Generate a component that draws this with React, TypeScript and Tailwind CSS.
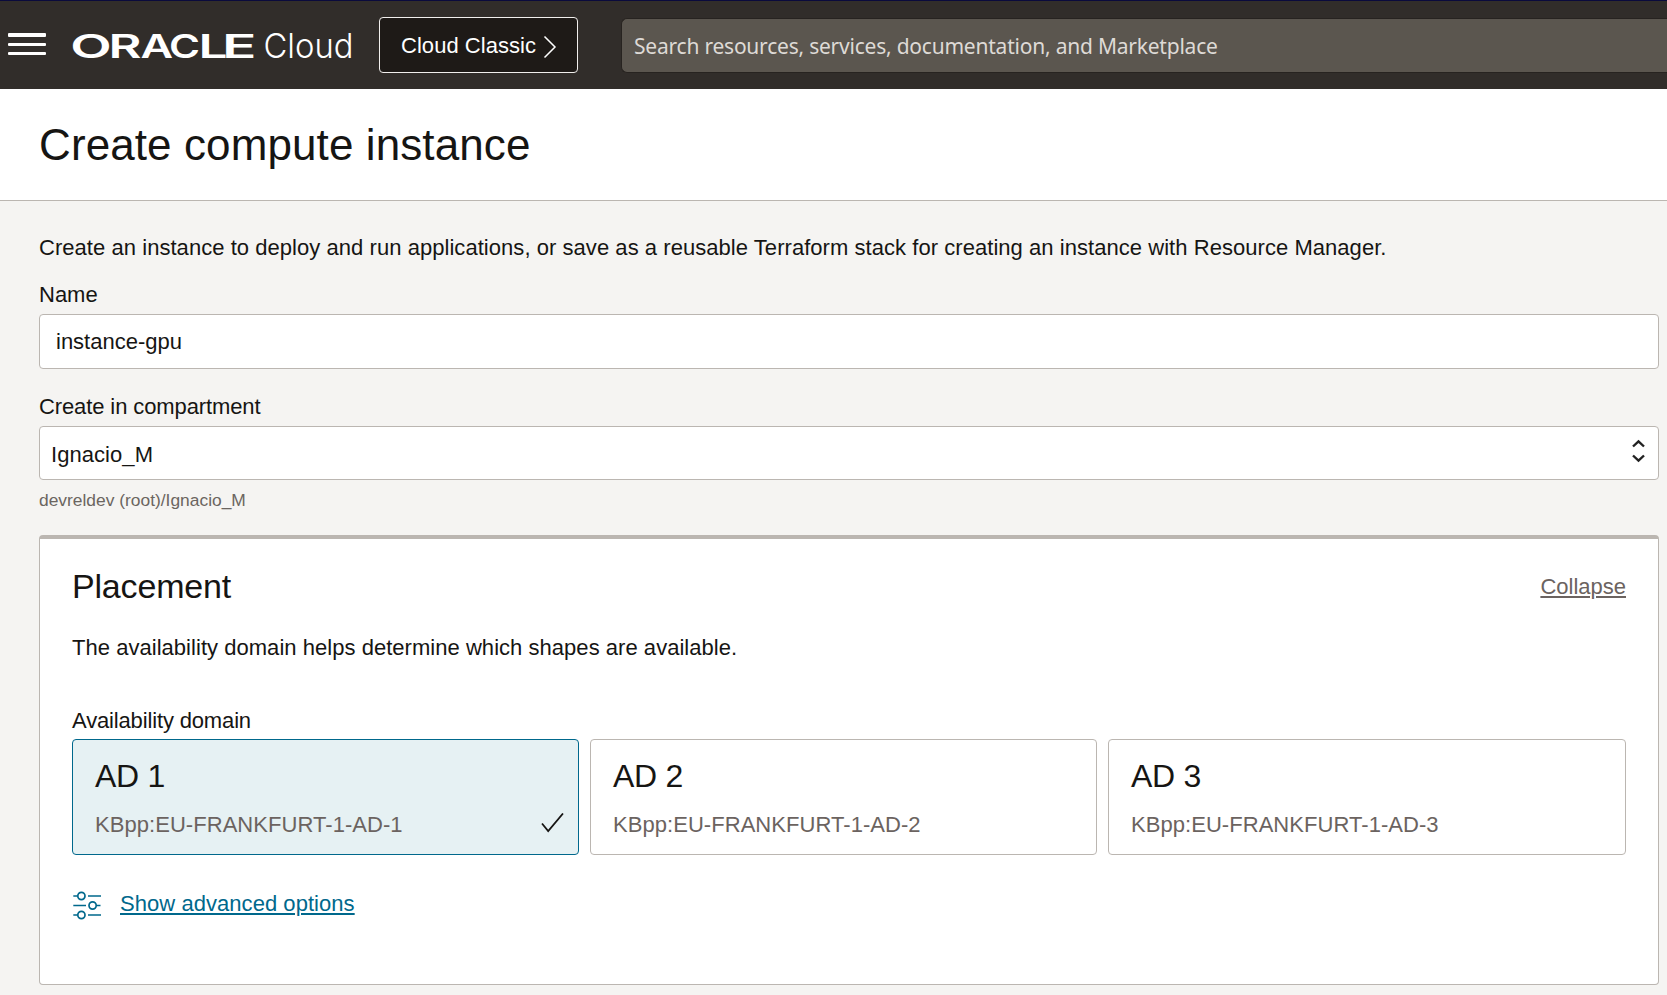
import React from "react";

const domains = [
  { title: "AD 1", id: "KBpp:EU-FRANKFURT-1-AD-1", selected: true },
  { title: "AD 2", id: "KBpp:EU-FRANKFURT-1-AD-2", selected: false },
  { title: "AD 3", id: "KBpp:EU-FRANKFURT-1-AD-3", selected: false },
];

// Each wordmark letter is widened separately: [letter, x, advance].
const wordmark: [string, number, number][] = [
  ["O", -1.7, 41.4],
  ["R", 36.4, 33],
  ["A", 68.4, 32.6],
  ["C", 97, 31],
  ["L", 126.4, 29],
  ["E", 150, 34.5],
];

function Logo() {
  return (
    <svg className="ml-[25px] block h-[50px] w-[284px] shrink-0 overflow-visible" viewBox="0 0 284 50" fill="#fff" aria-label="ORACLE Cloud">
      <text y="38" fontFamily="Inter, sans-serif" fontWeight="600" fontSize="32">
        {wordmark.map(([ch, x, len]) => (
          <tspan key={ch} x={x} textLength={len} lengthAdjust="spacingAndGlyphs">
            {ch}
          </tspan>
        ))}
      </text>
      <text x="191.500" y="38" fontFamily="Inter, sans-serif" fontWeight="300" fontSize="34.500" textLength="90" lengthAdjust="spacingAndGlyphs">
        Cloud
      </text>
    </svg>
  );
}

function Header() {
  return (
    <header className="flex h-[89px] items-center border-t border-[#0a0a3c] bg-[#312d2a]">
      <svg className="ml-2 block h-[24px] w-[39px] shrink-0" viewBox="0 0 39 24" fill="#fff">
        <rect x="0" y="0" width="38" height="4" rx="1" />
        <rect x="0" y="10" width="38" height="3" rx="1" />
        <rect x="0" y="19" width="38" height="3" rx="1" />
      </svg>
      <Logo />
      <button className="ml-[23px] flex h-[56px] w-[199px] shrink-0 items-center rounded-[4px] border border-[#f1efed] bg-[#1e1a17] pl-[21px] text-[22px] text-white">
        <span className="pt-[2px] tracking-[0.04px] whitespace-nowrap">Cloud Classic</span>
        <svg className="mt-[3px] ml-[7px] block h-6 w-[14px]" viewBox="0 0 14 24" fill="none" stroke="#fff" strokeWidth="1.5">
          <path d="M1.5 1.5L12 12L1.5 22.5" />
        </svg>
      </button>
      <div className="ml-[43px] flex h-[55px] grow items-center rounded-l-[6px] border border-r-0 border-[#272320] bg-[#5b564f] pl-3 font-['Noto_Sans',sans-serif] text-[21px] text-[#dedad6]">
        <span className="pt-[2px] tracking-[-0.22px] whitespace-nowrap">Search resources, services, documentation, and Marketplace</span>
      </div>
    </header>
  );
}

export default function App() {
  return (
    <div className="h-[995px] overflow-hidden bg-[#f5f4f2] font-['Liberation_Sans',Arial,sans-serif] text-[22px] leading-[30px] text-[#161513]">
      <Header />
      <div className="h-[112px] border-b border-[#bbb6b1] bg-white pt-7 pl-[39px]">
        <h1 className="text-[44px] leading-[56px] tracking-[0.1px]">Create compute instance</h1>
      </div>
      <main className="flex flex-col pt-8 pr-2 pl-[39px]">
        <p className="tracking-[0.047px]">Create an instance to deploy and run applications, or save as a reusable Terraform stack for creating an instance with Resource Manager.</p>
        <label className="mt-[17px]">Name</label>
        <div className="mt-1 flex h-[55px] items-center rounded-[4px] border border-[#bbb6b1] bg-white pl-4">instance-gpu</div>
        <label className="mt-[23px] tracking-[-0.11px]">Create in compartment</label>
        <div className="mt-1 flex h-[54px] items-center justify-between rounded-[4px] border border-[#bbb6b1] bg-white pr-[13px] pl-[11px]">
          <span className="pt-1 tracking-[0.06px]">Ignacio_M</span>
          <svg className="-mt-1 block h-6 w-[14px]" viewBox="0 0 14 24" fill="none" stroke="#222" strokeWidth="2.4">
            <path d="M2 7.500L7.500 2.300L13 7.500M2 16.500L7.500 21.700L13 16.500" />
          </svg>
        </div>
        <p className="mt-2 text-[17.4px] leading-6 text-[#6b6560]">devreldev (root)/Ignacio_M</p>
        <section className="mt-[23px] flex h-[450px] flex-col rounded-[4px] border border-t-4 border-[#bbb6b1] bg-white px-8 pt-[27px]">
          <div className="flex items-center justify-between">
            <h2 className="text-[34px] leading-10 tracking-[-0.18px]">Placement</h2>
            <a className="mt-[2px] text-[#6b6360] underline decoration-2 underline-offset-2">Collapse</a>
          </div>
          <p className="mt-[27px] tracking-[0.035px]">The availability domain helps determine which shapes are available.</p>
          <div className="mt-[43px] tracking-[-0.15px]">Availability domain</div>
          <div className="mt-[3px] grid h-[116px] grid-cols-[507px_507px_1fr] gap-[11px]">
            {domains.map((d) => (
              <div
                key={d.title}
                className={
                  d.selected
                    ? "flex flex-col rounded-[4px] border border-[#00688c] bg-[#e6f1f3] pt-4 pr-[14px] pl-[22px]"
                    : "flex flex-col rounded-[4px] border border-[#bbb6b1] bg-white pt-4 pr-[14px] pl-[22px]"
                }
              >
                <div className="text-[32px] leading-10 tracking-[-0.3px]">{d.title}</div>
                <div className="mt-[14px] flex justify-between text-[#6b6360]">
                  <span className="tracking-[0.05px]">{d.id}</span>
                  {d.selected && (
                    <svg className="mt-[3px] block h-5 w-[23px]" viewBox="0 0 23 20" fill="none" stroke="#161513" strokeWidth="1.8">
                      <path d="M1 10.500L7.200 18L22 0.500" />
                    </svg>
                  )}
                </div>
              </div>
            ))}
          </div>
          <div className="mt-[34px] flex text-[#00688c]">
            <svg className="mt-[2px] ml-[1px] block h-[30px] w-7" viewBox="0 0 28 30" fill="none" stroke="#00688c" strokeWidth="1.7">
              <path d="M0.300 5H4.500M15 5H28M0.300 14.500H13M23.300 14.500H27.500M0.300 24H4.500M15 24H28" />
              <circle cx="8.400" cy="5" r="3.600" />
              <circle cx="19.600" cy="14.500" r="3.600" />
              <circle cx="8.400" cy="24" r="3.600" />
            </svg>
            <a className="ml-[19px] tracking-[0.05px] underline decoration-2 underline-offset-2">Show advanced options</a>
          </div>
        </section>
      </main>
    </div>
  );
}
